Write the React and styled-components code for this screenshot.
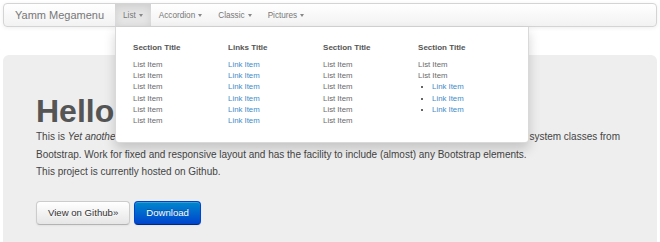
import styled, { createGlobalStyle } from "styled-components";

const GlobalStyle = createGlobalStyle`
  html, body {
    margin: 0;
    background: #ffffff;
    font-family: "Liberation Sans", Arial, sans-serif;
  }
`

const Page = styled.div`
  padding: 3px;
  height: 239px;
  overflow: hidden;
`

const Navbar = styled.div`
  display: flex;
  align-items: stretch;
  height: 22px;
  border: 1px solid #d4d4d4;
  border-radius: 4px;
  background: linear-gradient(#ffffff, #f2f2f2);
  box-shadow: 0 1px 4px rgba(0, 0, 0, 0.065);
  position: relative;
  z-index: 20;
`

const Brand = styled.div`
  display: flex;
  align-items: center;
  padding: 0 11px 0 11px;
  font-size: 11px;
  color: #777777;
`

const NavList = styled.div`
  display: flex;
  align-items: stretch;
`

const NavItem = styled.div`
  position: relative;
  display: flex;
  align-items: center;
  gap: 3px;
  padding: 0 8px;
  font-size: 8.2px;
  color: #777777;
  background: ${(p) => (p.$active ? "#e5e5e5" : "transparent")};
  box-shadow: ${(p) => (p.$active ? "inset 0 3px 8px rgba(0, 0, 0, 0.1)" : "none")};
`

const Caret = styled.span`
  width: 0;
  height: 0;
  border-top: 3px solid #888888;
  border-left: 2.5px solid transparent;
  border-right: 2.5px solid transparent;
`

const MegaMenu = styled.div`
  position: absolute;
  top: calc(100% + 1px);
  left: 0;
  width: 414px;
  box-sizing: border-box;
  display: grid;
  grid-template-columns: repeat(4, 95px);
  align-items: start;
  padding: 15px 17px 16px;
  background: #ffffff;
  border: 1px solid rgba(0, 0, 0, 0.15);
  border-top: none;
  border-radius: 0 0 4px 4px;
  box-shadow: 0 6px 12px rgba(0, 0, 0, 0.175);
`

const Column = styled.div`
  display: flex;
  flex-direction: column;
`

const ColumnTitle = styled.div`
  font-size: 8px;
  font-weight: bold;
  color: #555555;
  line-height: 11.2px;
  margin-bottom: 5.8px;
`

const MenuItem = styled.div`
  font-size: 7.8px;
  line-height: 11.2px;
  color: ${(p) => (p.$link ? "#428bca" : "#6a6a6a")};
`

const BulletList = styled.ul`
  margin: 0;
  padding-left: 14px;
  list-style: disc;
  font-size: 7.8px;
  line-height: 11.2px;
  color: #333333;
`

const BulletLink = styled.li`
  color: #333333;
  span {
    color: #428bca;
  }
`

const Jumbotron = styled.div`
  margin-top: 28px;
  padding: 39.5px 33px 30px;
  background: #eeeeee;
  border-radius: 6px;
`

const Heading = styled.h1`
  margin: 0 0 1.5px;
  font-size: 32px;
  line-height: 32px;
  font-weight: bold;
  color: #555555;
`

const Lead = styled.p`
  margin: 0;
  font-size: 10px;
  line-height: 17.5px;
  color: #444444;
`

const Buttons = styled.div`
  display: flex;
  gap: 4px;
  margin-top: 20px;
`

const Button = styled.a`
  display: inline-block;
  font-size: 9.6px;
  line-height: 14px;
  padding: 4px 11px;
  border-radius: 4px;
  border: 1px solid;
  text-decoration: none;
  cursor: pointer;
  color: ${(p) => (p.$primary ? "#ffffff" : "#333333")};
  border-color: ${(p) => (p.$primary ? "#0044cc #0044cc #002a80" : "#cccccc #cccccc #b3b3b3")};
  background: ${(p) => (p.$primary ? "linear-gradient(#0088cc, #0044cc)" : "linear-gradient(#ffffff, #e6e6e6)")};
  text-shadow: ${(p) => (p.$primary ? "0 -1px 0 rgba(0, 0, 0, 0.25)" : "0 1px 1px rgba(255, 255, 255, 0.75)")};
  box-shadow: inset 0 1px 0 rgba(255, 255, 255, 0.2), 0 1px 2px rgba(0, 0, 0, 0.05);
`

const listRows = [1, 2, 3, 4, 5, 6]

const App = () => {
  return (
    <Page>
      <GlobalStyle />
      <Navbar>
        <Brand>Yamm Megamenu</Brand>
        <NavList>
          <NavItem $active>
            List <Caret />
            <MegaMenu>
              <Column>
                <ColumnTitle>Section Title</ColumnTitle>
                {listRows.map((i) => (
                  <MenuItem key={i}>List Item</MenuItem>
                ))}
              </Column>
              <Column>
                <ColumnTitle>Links Title</ColumnTitle>
                {listRows.map((i) => (
                  <MenuItem key={i} $link>Link Item</MenuItem>
                ))}
              </Column>
              <Column>
                <ColumnTitle>Section Title</ColumnTitle>
                {listRows.map((i) => (
                  <MenuItem key={i}>List Item</MenuItem>
                ))}
              </Column>
              <Column>
                <ColumnTitle>Section Title</ColumnTitle>
                <MenuItem>List Item</MenuItem>
                <MenuItem>List Item</MenuItem>
                <BulletList>
                  <BulletLink><span>Link Item</span></BulletLink>
                  <BulletLink><span>Link Item</span></BulletLink>
                  <BulletLink><span>Link Item</span></BulletLink>
                </BulletList>
              </Column>
            </MegaMenu>
          </NavItem>
          <NavItem>Accordion <Caret /></NavItem>
          <NavItem>Classic <Caret /></NavItem>
          <NavItem>Pictures <Caret /></NavItem>
        </NavList>
      </Navbar>

      <Jumbotron>
        <Heading>Hello, world!</Heading>
        <Lead>
          This is <i>Yet another megamenu for Bootstrap 3</i> from Twitter. Uses the standard navigation structure and the grid system classes from
          <br />
          Bootstrap. Work for fixed and responsive layout and has the facility to include (almost) any Bootstrap elements.
        </Lead>
        <Lead>This project is currently hosted on Github.</Lead>
        <Buttons>
          <Button>View on Github»</Button>
          <Button $primary>Download</Button>
        </Buttons>
      </Jumbotron>
    </Page>
  )
}

export default App;
